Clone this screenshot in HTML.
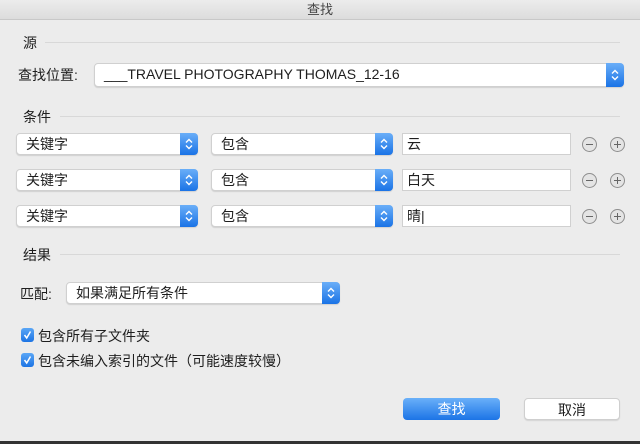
<!DOCTYPE html>
<html><head><meta charset="utf-8"><style>
*{margin:0;padding:0;box-sizing:border-box}
body{width:640px;height:444px;background:#ececec;font-family:"Liberation Sans","Noto Sans CJK SC",sans-serif;font-size:14px;color:#1e1e1e;position:relative;overflow:hidden}
.a{position:absolute}
.title{left:0;top:0;width:640px;height:20px;background:linear-gradient(#ececec,#dcdcdc);border-bottom:1px solid #c8c8c8;text-align:center;line-height:19px;color:#444;font-size:13px}
.sep{height:1px;background:#d8d8d8}
.pop{background:#fff;border:1px solid #d0d0d0;border-radius:4px;box-shadow:0 1px 1px rgba(0,0,0,.12);line-height:20px;padding-left:9px}
.arr{position:absolute;right:-1px;top:-1px;bottom:-1px;width:18px;background:linear-gradient(#6aaef8,#1a73e6);border-radius:0 4px 4px 0}
.arr svg{position:absolute;left:4px;top:50%;margin-top:-6px}
.tf{background:#fff;border:1px solid #d0d0d0;line-height:20px;padding-left:4px}
.circ{width:15px;height:15px;border:1px solid #8e8e8e;border-radius:50%;background:#e4e4e4}
.circ:before{content:"";position:absolute;left:3px;top:6px;width:7px;height:1px;background:#666}
.plus:after{content:"";position:absolute;left:6px;top:3px;width:1px;height:7px;background:#666}
.cb{width:13px;height:14px;background:linear-gradient(#5aa6f6,#1d74e4);border-radius:3px}
.btn{height:22px;border-radius:4px;text-align:center;line-height:22px}
</style></head><body>
<div class="a title">查找</div>
<div class="a" style="left:23px;top:33px">源</div>
<div class="a sep" style="left:45px;top:42px;width:575px"></div>
<div class="a" style="left:18px;top:65px">查找位置:</div>
<div class="a pop" style="left:94px;top:63px;width:530px;height:24px;font-size:14px">___TRAVEL PHOTOGRAPHY THOMAS_12-16<div class="arr"><svg width="10" height="12"><path d="M2 4.5L5 1.5 8 4.5M2 7.5L5 10.5 8 7.5" stroke="#fff" stroke-width="1.4" fill="none"/></svg></div></div>
<div class="a" style="left:23px;top:107px">条件</div>
<div class="a sep" style="left:60px;top:116px;width:560px"></div>

<div class="a pop" style="left:16px;top:133px;width:182px;height:22px">关键字<div class="arr"><svg width="10" height="12"><path d="M2 4.5L5 1.5 8 4.5M2 7.5L5 10.5 8 7.5" stroke="#fff" stroke-width="1.4" fill="none"/></svg></div></div>
<div class="a pop" style="left:211px;top:133px;width:182px;height:22px">包含<div class="arr"><svg width="10" height="12"><path d="M2 4.5L5 1.5 8 4.5M2 7.5L5 10.5 8 7.5" stroke="#fff" stroke-width="1.4" fill="none"/></svg></div></div>
<div class="a tf" style="left:402px;top:133px;width:169px;height:22px">云</div>
<div class="a circ" style="left:582px;top:137px"></div><div class="a circ plus" style="left:610px;top:137px"></div>

<div class="a pop" style="left:16px;top:169px;width:182px;height:22px">关键字<div class="arr"><svg width="10" height="12"><path d="M2 4.5L5 1.5 8 4.5M2 7.5L5 10.5 8 7.5" stroke="#fff" stroke-width="1.4" fill="none"/></svg></div></div>
<div class="a pop" style="left:211px;top:169px;width:182px;height:22px">包含<div class="arr"><svg width="10" height="12"><path d="M2 4.5L5 1.5 8 4.5M2 7.5L5 10.5 8 7.5" stroke="#fff" stroke-width="1.4" fill="none"/></svg></div></div>
<div class="a tf" style="left:402px;top:169px;width:169px;height:22px">白天</div>
<div class="a circ" style="left:582px;top:173px"></div><div class="a circ plus" style="left:610px;top:173px"></div>

<div class="a pop" style="left:16px;top:205px;width:182px;height:22px">关键字<div class="arr"><svg width="10" height="12"><path d="M2 4.5L5 1.5 8 4.5M2 7.5L5 10.5 8 7.5" stroke="#fff" stroke-width="1.4" fill="none"/></svg></div></div>
<div class="a pop" style="left:211px;top:205px;width:182px;height:22px">包含<div class="arr"><svg width="10" height="12"><path d="M2 4.5L5 1.5 8 4.5M2 7.5L5 10.5 8 7.5" stroke="#fff" stroke-width="1.4" fill="none"/></svg></div></div>
<div class="a tf" style="left:402px;top:205px;width:169px;height:22px">晴|</div>
<div class="a circ" style="left:582px;top:209px"></div><div class="a circ plus" style="left:610px;top:209px"></div>

<div class="a" style="left:23px;top:245px">结果</div>
<div class="a sep" style="left:60px;top:254px;width:560px"></div>
<div class="a" style="left:20px;top:284px">匹配:</div>
<div class="a pop" style="left:66px;top:282px;width:274px;height:22px">如果满足所有条件<div class="arr"><svg width="10" height="12"><path d="M2 4.5L5 1.5 8 4.5M2 7.5L5 10.5 8 7.5" stroke="#fff" stroke-width="1.4" fill="none"/></svg></div></div>

<div class="a cb" style="left:21px;top:328px"><svg width="13" height="14"><path d="M3.5 7L5.7 10 9.5 3.5" stroke="#fff" stroke-width="1.5" fill="none"/></svg></div>
<div class="a" style="left:38px;top:326px">包含所有子文件夹</div>
<div class="a cb" style="left:21px;top:353px"><svg width="13" height="14"><path d="M3.5 7L5.7 10 9.5 3.5" stroke="#fff" stroke-width="1.5" fill="none"/></svg></div>
<div class="a" style="left:38px;top:351px">包含未编入索引的文件（可能速度较慢）</div>

<div class="a btn" style="left:403px;top:398px;width:97px;background:linear-gradient(#6ab0f9,#1c74e6);color:#fff">查找</div>
<div class="a btn" style="left:524px;top:398px;width:96px;background:#fff;border:1px solid #cfcfcf;box-shadow:0 1px 1px rgba(0,0,0,.1)">取消</div>
<div class="a" style="left:0;top:441px;width:640px;height:3px;background:#333"></div>
</body></html>
